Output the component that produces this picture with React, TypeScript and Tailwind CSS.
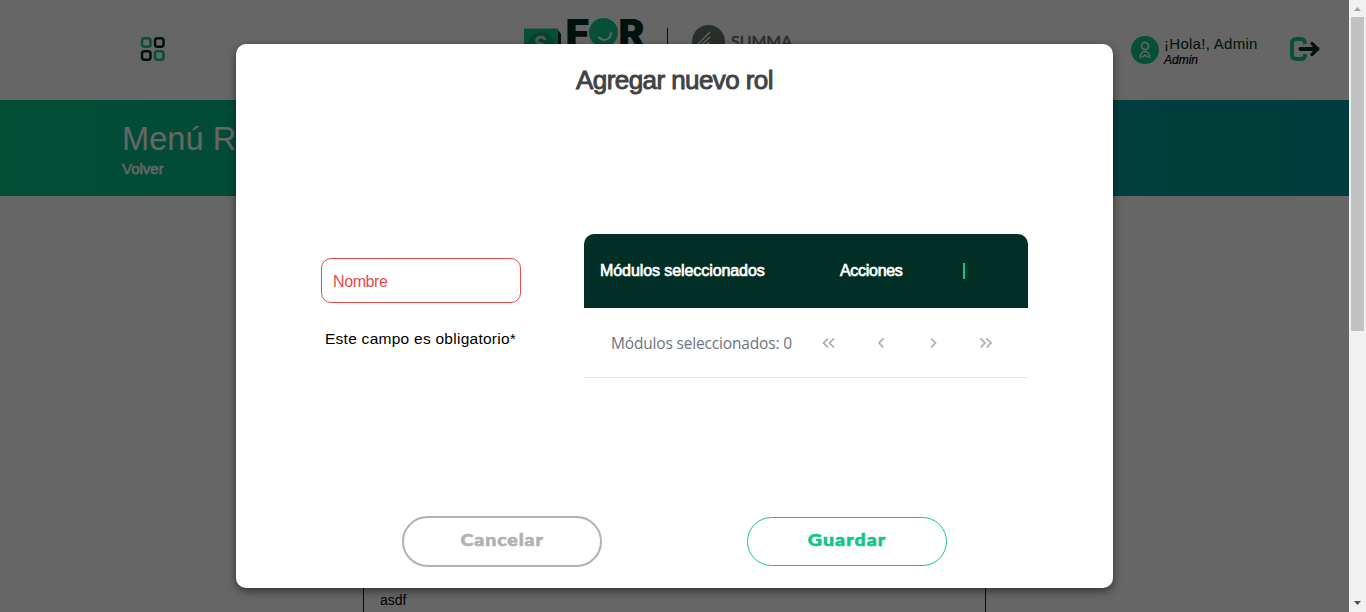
import React from "react";

function GridIcon() {
  return (
    <svg width="26" height="26" viewBox="0 0 26 26" fill="none" strokeWidth="2.5">
      <rect x="2" y="2.250" width="8.500" height="8.500" rx="2.500" stroke="#13c687" />
      <rect x="15" y="2.250" width="8.500" height="8.500" rx="2.500" stroke="#012d24" />
      <rect x="2" y="15.250" width="8.500" height="8.500" rx="2.500" stroke="#012d24" />
      <rect x="15" y="15.250" width="8.500" height="8.500" rx="2.500" stroke="#13c687" />
    </svg>
  );
}

function Logo() {
  return (
    <svg width="280" height="60" viewBox="0 0 280 60">
      <path d="M38 16l3 4v28h-3z" fill="#012d24" />
      <rect x="4" y="14.500" width="34" height="34" fill="#13c687" />
      <circle cx="21" cy="31" r="13" fill="#0fa870" />
      <path d="M25.500 26c-2-4.500-9-3.500-9 0.500c0 4 9 2.500 9 7.500c0 4-7.500 5-10 1" stroke="#d5d5d5" strokeWidth="2.800" fill="none" />
      <text x="45.500" y="32" fontFamily="Inter, sans-serif" fontWeight="900" fontSize="37" textLength="24" lengthAdjust="spacingAndGlyphs" fill="#012d24">F</text>
      <text x="98.500" y="32" fontFamily="Inter, sans-serif" fontWeight="900" fontSize="37" textLength="26" lengthAdjust="spacingAndGlyphs" fill="#012d24">R</text>
      <circle cx="83.500" cy="18.500" r="14.500" fill="#13c687" />
      <path d="M79 23.500c4 4.500 11.500 2.500 12-4.500" stroke="#ffffff" strokeWidth="1.900" fill="none" strokeLinecap="round" />
      <path d="M147.500 14v32" stroke="#012d24" />
      <circle cx="188.500" cy="27.500" r="16.500" fill="#647665" />
      <path d="M174 34l16-16M177 35l13-12M181 35l8.500-7M185 35l4-3" stroke="#ffffff" strokeWidth="1.300" />
      <text x="211" y="33" fontFamily="Lato, sans-serif" fontWeight="500" fontSize="16" textLength="61" lengthAdjust="spacingAndGlyphs" fill="#647665" stroke="#647665" strokeWidth="0.400">SUMMA</text>
    </svg>
  );
}

function UserIcon() {
  return (
    <svg width="28" height="28" viewBox="0 0 28 28" fill="none">
      <circle cx="14" cy="14" r="14" fill="#13c687" />
      <circle cx="14" cy="10" r="3.500" stroke="#fff" strokeWidth="1.600" />
      <path d="M9.300 21.500c0-8 9.400-8 9.400 0M11.500 21l2.500-2 2.500 2" stroke="#fff" strokeWidth="1.500" strokeLinecap="round" strokeLinejoin="round" />
    </svg>
  );
}

function LogoutIcon() {
  return (
    <svg width="31" height="26" viewBox="0 0 31 26" fill="none" strokeLinecap="round" strokeLinejoin="round">
      <path d="M16 8V7q0-4-4-4H7Q3 3 3 7v12q0 4 4 4h5q4 0 4-4v-1" stroke="#13c687" strokeWidth="3.800" strokeLinecap="butt" />
      <path d="M11.500 13h17" stroke="#012d24" strokeWidth="4" />
      <path d="M23 7.500L28.500 13L23 18.500" stroke="#012d24" strokeWidth="3.300" />
    </svg>
  );
}

function Chevron({ d }: { d: string }) {
  return (
    <span className="flex w-[52.500px] justify-center">
      <svg width="16" height="16" viewBox="0 0 16 16" fill="none" stroke="#a6abaf" strokeWidth="1.700">
        <path d={d} />
      </svg>
    </span>
  );
}

function Page() {
  return (
    <div className="h-full w-full bg-white">
      <header className="flex h-[100px] bg-white">
        <div className="w-[520px] pt-9 pl-[140px]"><GridIcon /></div>
        <div className="w-[611px] pt-[14px]"><Logo /></div>
        <div className="flex w-[158px] pt-9">
          <UserIcon />
          <div className="pl-[5px] text-[#012d24]">
            <p className="text-[15px] leading-4 tracking-[0.280px] whitespace-nowrap">¡Hola!, Admin</p>
            <p className="text-[12px] leading-4 text-black italic [-webkit-text-stroke:0.200px_black]">Admin</p>
          </div>
        </div>
        <div className="pt-9"><LogoutIcon /></div>
      </header>
      <section className="h-24 bg-linear-to-r from-[#0ac387] to-[#00969b] pt-[19px] pl-[122px] text-white">
        <h1 className="text-[32.500px] leading-10 tracking-[0.100px]">Menú Roles</h1>
        <p className="text-[15px] leading-5 [-webkit-text-stroke:0.500px_white]">Volver</p>
      </section>
      <div className="ml-[363px] flex h-[416px] w-[623px] items-end border-x border-[#012d24] pb-1 pl-4">
        <p className="text-[14px] leading-4 text-black">asdf</p>
      </div>
    </div>
  );
}

function Dialog() {
  return (
    <div className="flex h-[544px] w-[877px] flex-col rounded-[10px] bg-white shadow-[0_3px_8px_rgba(0,0,0,0.5)]">
      <h2 className="h-[190px] pt-[18px] text-center text-[26px] leading-9 tracking-[-0.580px] text-[#424242] [-webkit-text-stroke:0.900px_#424242]">Agregar nuevo rol</h2>
      <div className="flex h-[282px]">
        <div className="w-[348px] pt-6 pl-[85px]">
          <div className="flex h-[45px] w-[200px] items-center rounded-[10px] border border-[#e24c4c] pt-0.5 pl-[11px] text-base tracking-[-0.400px] text-[#e24c4c]">Nombre</div>
          <p className="pt-[25px] pl-1 text-[15.500px] leading-[22px] tracking-[0.260px] text-black">Este campo es obligatorio*</p>
        </div>
        <div className="w-[444px]">
          <div className="flex h-[74px] items-center rounded-t-[10px] bg-[#012f25] text-base tracking-[-0.080px] text-white [-webkit-text-stroke:0.700px_white]">
            <span className="w-[255px] pl-4">Módulos seleccionados</span>
            <span className="w-[124px] pl-px tracking-[-0.300px]">Acciones</span>
            <span className="h-4 w-0.5 bg-[#13c687]" />
          </div>
          <div className="flex h-[70px] items-center border-b border-[#e5e8e9]">
            <span className="w-[218px] pt-0.5 pl-[27px] font-['Open_Sans',sans-serif] text-[15.500px] tracking-[-0.170px] whitespace-nowrap text-[#6c757d]">Módulos seleccionados: 0</span>
            <Chevron d="M8 3.500L3.500 8L8 12.500M14 3.500L9.500 8L14 12.500" />
            <Chevron d="M10.500 3.500L6 8L10.500 12.500" />
            <Chevron d="M6 3.500L10.500 8L6 12.500" />
            <Chevron d="M2.500 3.500L7 8L2.500 12.500M8.500 3.500L13 8L8.500 12.500" />
          </div>
        </div>
      </div>
      <div className="flex justify-between pr-[166px] pl-[166px] font-['Lato',sans-serif] text-[17.500px] font-black">
        <button className="flex h-[51px] w-[200px] items-center justify-center rounded-full border-2 border-[#b2b2b2] pb-[3px] text-[#b2b2b2] [-webkit-text-stroke:0.600px_#b2b2b2]">
          <span className="scale-x-112 pl-px tracking-[0.750px]">Cancelar</span>
        </button>
        <button className="mt-px flex h-[49px] w-[200px] items-center justify-center rounded-full border border-[#13c687] pb-[3px] text-[#13c687] [-webkit-text-stroke:0.600px_#13c687]">
          <span className="scale-x-112 tracking-[0.950px]">Guardar</span>
        </button>
      </div>
    </div>
  );
}

export default function App() {
  return (
    <div className="flex h-[612px] w-[1366px] overflow-hidden font-['Liberation_Sans',Arial,sans-serif]">
      <main className="relative h-full w-[1349px]">
        <Page />
        <div className="absolute inset-0 flex items-start bg-black/60 pt-11 pl-[236px]"><Dialog /></div>
      </main>
      <aside className="flex w-[17px] flex-col items-center justify-between bg-[#f1f1f1]">
        <svg width="17" height="17"><path d="M5 11h7L8.500 7z" fill="#a3a3a3" /></svg>
        <div className="mb-auto h-[314px] w-[13px] bg-[#c1c1c1]" />
        <svg width="17" height="17"><path d="M5 6h7L8.500 10z" fill="#505050" /></svg>
      </aside>
    </div>
  );
}
